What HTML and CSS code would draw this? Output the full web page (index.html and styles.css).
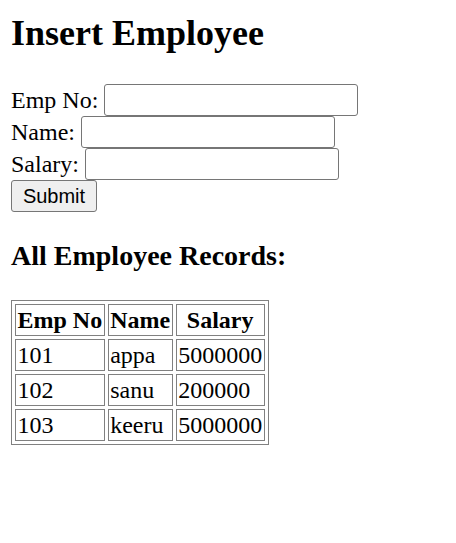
FILE: index.html
```html
<!DOCTYPE html>
<html>
<head>
<meta charset="utf-8">
<title>Insert Employee</title>
<link rel="stylesheet" href="styles.css">
</head>
<body>
<h2 class="title">Insert Employee</h2>
<form class="emp-form">
  Emp No: <input type="text" class="field field-empno" name="empno"><br>
  Name: <input type="text" class="field" name="name"><br>
  Salary: <input type="text" class="field" name="salary"><br>
  <input type="submit" class="submit-btn" value="Submit">
</form>
<h3 class="subtitle">All Employee Records:</h3>
<table class="records">
  <tr><th>Emp No</th><th>Name</th><th>Salary</th></tr>
  <tr><td>101</td><td>appa</td><td>5000000</td></tr>
  <tr><td>102</td><td>sanu</td><td>200000</td></tr>
  <tr><td>103</td><td>keeru</td><td>5000000</td></tr>
</table>
</body>
</html>
```
FILE: styles.css
```css
html { background: #fff; }
body {
  margin: 12px 12px 12px 11px;
  font-family: "Liberation Serif", "Times New Roman", serif;
  font-size: 24px;
  color: #000;
}
.title {
  font-size: 36px;
  font-weight: bold;
  margin: 0 0 30px;
}
.emp-form {
  margin: 0 0 24px;
  line-height: 32px;
}
.field {
  box-sizing: border-box;
  width: 254px;
  height: 32px;
  margin: 0;
  padding: 1px 3px;
  border: 1px solid #767676;
  border-radius: 3px;
  font-family: "Liberation Sans", Arial, sans-serif;
  font-size: 20px;
  vertical-align: bottom;
  background: #fff;
}
.submit-btn {
  box-sizing: border-box;
  width: 86px;
  height: 32px;
  margin: 0;
  padding: 1px 9px;
  border: 1px solid #767676;
  border-radius: 3px;
  background: #efefef;
  font-family: "Liberation Sans", Arial, sans-serif;
  font-size: 20px;
  color: #000;
  vertical-align: bottom;
}
.subtitle {
  font-size: 28px;
  font-weight: bold;
  margin: 28px 0;
}
.records {
  border: 1px solid #808080;
  border-spacing: 3px;
}
.records th,
.records td {
  border: 1px solid #808080;
  padding: 1.5px;
  height: 32px;
  box-sizing: border-box;
  text-align: left;
}
.records th {
  text-align: center;
}
```
